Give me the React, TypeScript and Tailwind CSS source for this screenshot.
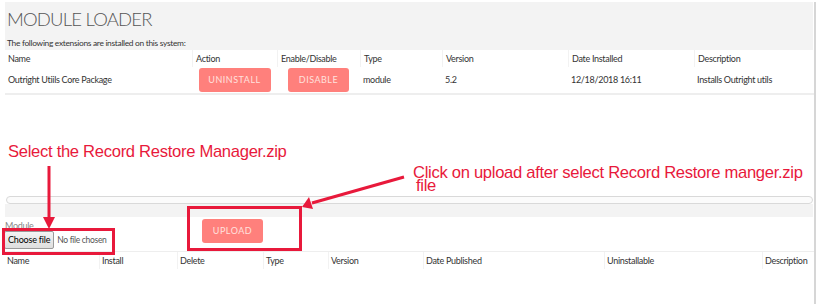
const installedCols = [
  { label: "Name", w: "w-[187px]" },
  { label: "Action", w: "w-[85px]" },
  { label: "Enable/Disable", w: "w-[83px]" },
  { label: "Type", w: "w-[82px]" },
  { label: "Version", w: "w-[126px]" },
  { label: "Date Installed", w: "w-[126px]" },
  { label: "Description", w: "flex-1" },
];

const availableCols = [
  { label: "Name", w: "w-[94px]" },
  { label: "Install", w: "w-[78px]" },
  { label: "Delete", w: "w-[86px]" },
  { label: "Type", w: "w-[65px]" },
  { label: "Version", w: "w-[95px]" },
  { label: "Date Published", w: "w-[181px]" },
  { label: "Uninstallable", w: "w-[158px]" },
  { label: "Description", w: "flex-1" },
];

function SalmonButton({ label, width }: { label: string; width: string }) {
  return (
    <button
      className={`${width} h-[24px] rounded-[3px] bg-[#ff807c] text-[9px] tracking-[0.5px] text-[#ffe0de] font-['Lato',sans-serif]`}
    >
      {label}
    </button>
  );
}

function Annotations() {
  const red = "#e8193b";
  return (
    <>
      <div className="absolute left-[8px] top-[143px] text-[16.6px] leading-[18px] text-[#e8193b] font-['Liberation_Sans',Arial,sans-serif]">
        Select the Record Restore Manager.zip
      </div>
      <div className="absolute left-[413px] top-[166px] text-[16.6px] leading-[13px] text-[#e8193b] font-['Liberation_Sans',Arial,sans-serif]">
        <div>Click on upload after select Record Restore manger.zip</div>
        <div className="pl-[3px]">file</div>
      </div>

      <svg className="absolute left-0 top-0 pointer-events-none" width="817" height="304">
        <line x1="49" y1="166" x2="49" y2="219" stroke={red} strokeWidth="3" />
        <polygon points="43,217 55,217 49,229" fill={red} />
        <line x1="404" y1="177" x2="312" y2="203" stroke={red} strokeWidth="3" />
        <polygon points="302,207 309,197 313,209" fill={red} />
      </svg>

      <div className="absolute left-[2px] top-[228px] w-[113px] h-[27px] border-[3px] border-[#e8193b]" />
      <div className="absolute left-[187px] top-[206px] w-[115px] h-[45px] border-[3px] border-[#e8193b]" />
    </>
  );
}

export default function App() {
  return (
    <div className="relative w-[817px] h-[304px] overflow-hidden bg-white font-['Lato',sans-serif] text-[9px] tracking-[-0.3px] text-[#333]">
      <div className="ml-[5px] w-[811px] h-full border-r-2 border-[#d6d6d6]">
        {/* title panel */}
        <div className="mt-[2px] h-[48px] mr-[1px] bg-[#f3f3f3] pl-[2px] pt-[6px]">
          <h1 className="text-[18.5px] leading-[22px] font-light tracking-[-0.8px] text-[#555]">
            MODULE LOADER
          </h1>
          <p className="mt-[8px] text-[8.4px] leading-[11px] tracking-[-0.3px] text-[#333]">
            The following extensions are installed on this system:
          </p>
        </div>

        {/* installed table */}
        <div className="flex h-[17px] items-center">
          {installedCols.map((c, i) => (
            <div
              key={c.label}
              className={`${c.w} h-full flex items-center pl-[3px] ${i > 0 ? "border-l border-[#f2f2f2]" : ""}`}
            >
              {c.label}
            </div>
          ))}
        </div>
        <div className="flex h-[28px] items-center border-b-2 border-[#eeeeee]">
          <div className="w-[187px] pl-[3px]">Outright Utiils Core Package</div>
          <div className="w-[85px] flex justify-center">
            <SalmonButton label="UNINSTALL" width="w-[72px]" />
          </div>
          <div className="w-[83px] flex justify-center">
            <SalmonButton label="DISABLE" width="w-[61px]" />
          </div>
          <div className="w-[82px] pl-[3px]">module</div>
          <div className="w-[126px] pl-[3px]">5.2</div>
          <div className="w-[126px] pl-[3px]">12/18/2018 16:11</div>
          <div className="flex-1 pl-[3px]">Installs Outright utils</div>
        </div>

        {/* blank area + scroller */}
        <div className="h-[101px]" />
        <div className="mr-[1px] ml-[1px] h-[8px] rounded-full border border-[#d9d9d9] bg-[#fbfbfb]" />
        <div className="mr-[1px] h-[13px] bg-[#f3f3f3]" />

        {/* upload form */}
        <div className="flex h-[34px]">
          <div className="w-[197px] flex flex-col">
            <div className="h-[14px] pt-[4px] leading-[10px] text-[#888]">Module</div>
            <div className="flex items-center gap-[3px] ml-[-1px]">
              <button className="h-[18px] px-[3px] rounded-[2px] border border-[#9a9a9a] bg-gradient-to-b from-[#f4f4f4] to-[#dedede] text-[9px] tracking-[-0.2px] text-black">
                Choose file
              </button>
              <span className="text-[8.5px] tracking-[-0.3px] text-[#555]">No file chosen</span>
            </div>
          </div>
          <div className="pt-[2px]">
            <SalmonButton label="UPLOAD" width="w-[61px]" />
          </div>
        </div>

        {/* available table header */}
        <div className="flex h-[18px] items-center border-t border-[#eeeeee]">
          {availableCols.map((c, i) => (
            <div
              key={c.label}
              className={`${c.w} h-full flex items-center pl-[2px] ${i > 0 ? "border-l border-[#f2f2f2]" : ""}`}
            >
              {c.label}
            </div>
          ))}
        </div>
      </div>

      <Annotations />
    </div>
  );
}
